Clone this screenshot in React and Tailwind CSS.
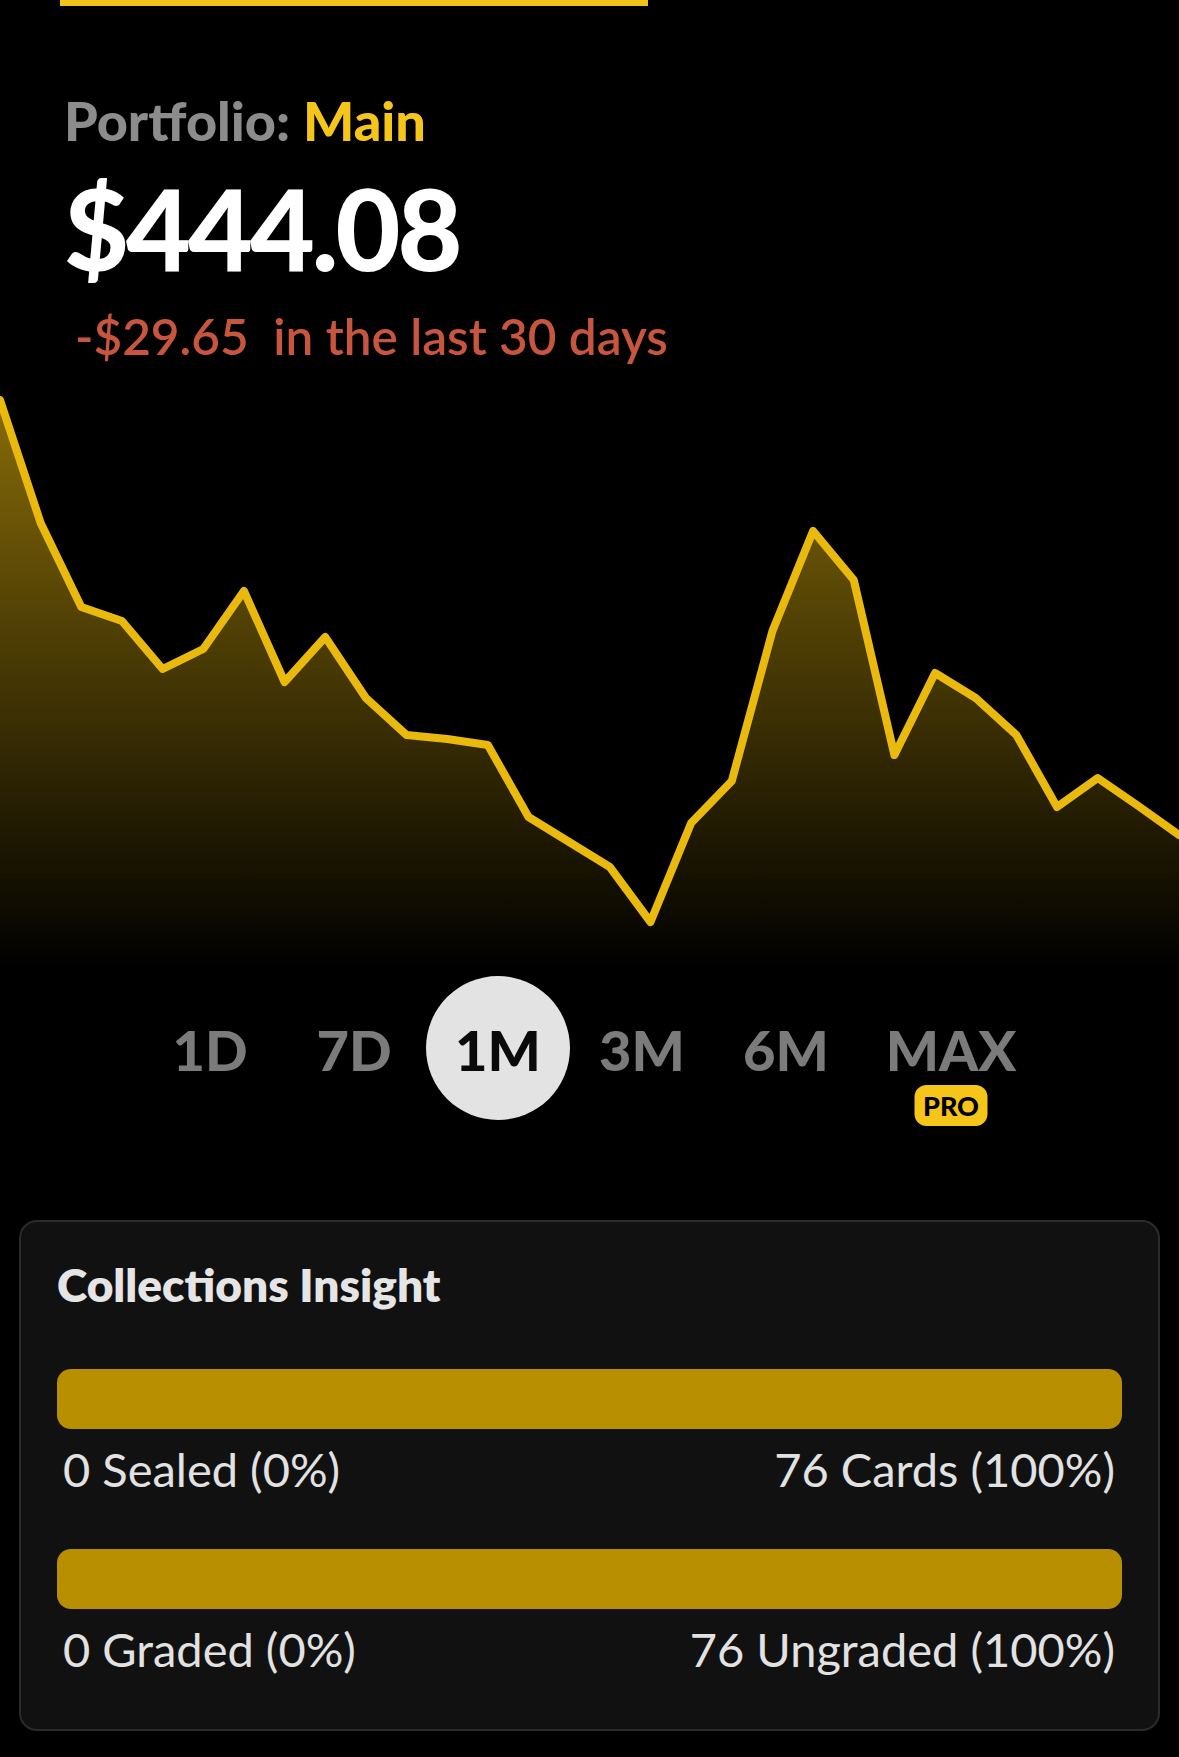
import React from "react";

// y values of the 1M price line, in px from the top of the chart box
const chartPoints = [
  22, 145, 229, 243, 291, 271, 213, 304, 259, 320, 357, 361, 367, 439, 464,
  489, 544, 445, 403, 253, 153, 202, 377, 295, 320, 357, 429, 400, 428, 457,
];

const ranges = ["1D", "7D", "1M", "3M", "6M", "MAX"];

function PriceChart() {
  const width = 1179;
  const height = 590;
  const step = width / (chartPoints.length - 1);
  const line = chartPoints
    .map((y, i) => `${i === 0 ? "M" : "L"}${(i * step).toFixed(2)},${y}`)
    .join(" ");
  const area = `${line} L${width},${height} L0,${height} Z`;

  return (
    <svg
      className="mt-[15px] block h-[590px] w-full"
      viewBox={`0 0 ${width} ${height}`}
      preserveAspectRatio="none"
    >
      <defs>
        <linearGradient id="fillGold" x1="0" y1="0" x2="0" y2={height} gradientUnits="userSpaceOnUse">
          <stop offset="0" stopColor="#E9B90E" stopOpacity="0.6" />
          <stop offset="1" stopColor="#E9B90E" stopOpacity="0" />
        </linearGradient>
      </defs>
      <path d={area} fill="url(#fillGold)" />
      <path
        d={line}
        fill="none"
        stroke="#E9B90E"
        strokeWidth="8"
        strokeLinejoin="round"
        strokeLinecap="round"
      />
    </svg>
  );
}

function RangePicker() {
  return (
    <div className="mt-[8px] flex h-[144px] pl-[138px]">
      {ranges.map((r) => {
        const active = r === "1M";
        const isMax = r === "MAX";
        return (
          <div
            key={r}
            className={`relative flex h-[144px] w-[144px] items-center justify-center rounded-full pt-[4px] text-[56px] leading-none font-black ${
              active ? "bg-[#E3E3E3] text-[#0a0a0a]" : "text-[#7B7B7B]"
            } ${isMax ? "ml-[21px]" : ""}`}
          >
            {r}
            {isMax && (
              <span className="absolute top-[109px] left-1/2 flex h-[41px] w-[73px] -translate-x-1/2 items-center justify-center rounded-[12px] bg-[#F6C51A] text-[27px] font-black text-black">
                PRO
              </span>
            )}
          </div>
        );
      })}
    </div>
  );
}

function InsightBar({ left, right }) {
  return (
    <>
      <div className="h-[60px] rounded-[14px] bg-[#B78F00]" />
      <div className="mt-[12px] flex justify-between pr-[7px] pl-[6px] text-[47px] leading-[56px] text-[#E2E2E2]">
        <span>{left}</span>
        <span>{right}</span>
      </div>
    </>
  );
}

export default function App() {
  return (
    <div className="min-h-screen bg-black font-[Lato,sans-serif]">
      {/* active tab underline */}
      <div className="ml-[60px] h-[6px] w-[588px] bg-[#F0C21A]" />

      {/* Portfolio header */}
      <div className="pt-[85px] pl-[64px]">
        <div className="text-[54px] leading-[60px] font-black text-[#8C8C8C]">
          Portfolio: <span className="text-[#F6C51A]">Main</span>
        </div>
        <div className="mt-[21px] text-[112px] leading-[112px] font-black tracking-[-3px] text-white">
          $444.08
        </div>
        <div className="mt-[25px] pl-[11px] text-[49.5px] leading-[54px] font-semibold whitespace-pre text-[#C8553D]">
          -$29.65  in the last 30 days
        </div>
      </div>

      <PriceChart />
      <RangePicker />

      {/* Collections Insight */}
      <div className="mx-[19px] mt-[100px] rounded-[18px] border-2 border-[#2B2B2B] bg-[#111111] px-[36px] pt-[35px] pb-[52px]">
        <div className="text-[46px] leading-[55px] font-extrabold text-[#E5E5E5]">
          Collections Insight
        </div>
        <div className="mt-[57px]">
          <InsightBar left="0 Sealed (0%)" right="76 Cards (100%)" />
        </div>
        <div className="mt-[52px]">
          <InsightBar left="0 Graded (0%)" right="76 Ungraded (100%)" />
        </div>
      </div>
    </div>
  );
}
